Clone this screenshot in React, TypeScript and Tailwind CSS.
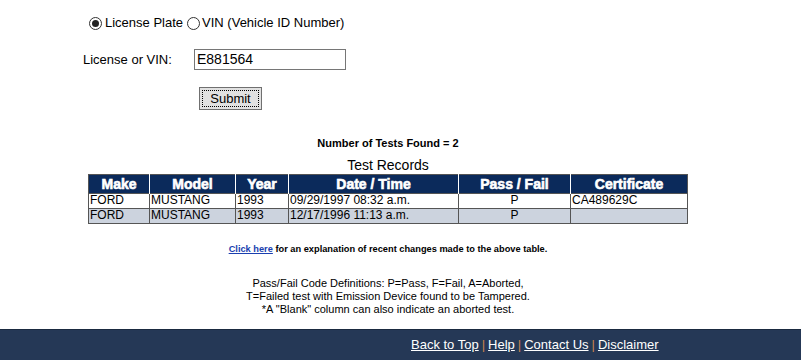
import React from "react";

const COLS = [
  { label: "Make", w: "w-[61px]" },
  { label: "Model", w: "w-[86px]" },
  { label: "Year", w: "w-[53px]" },
  { label: "Date / Time", w: "w-[170px]" },
  { label: "Pass / Fail", w: "w-[112px]" },
  { label: "Certificate", w: "w-[117px]" },
];

const ROWS = [
  ["FORD", "MUSTANG", "1993", "09/29/1997 08:32 a.m.", "P", "CA489629C"],
  ["FORD", "MUSTANG", "1993", "12/17/1996 11:13 a.m.", "P", ""],
];

export default function App() {
  return (
    <div className="flex h-[360px] w-[801px] flex-col bg-white font-['Liberation_Sans',Arial,sans-serif] text-black">
      <div className="w-[776px] flex-1">
        <div className="flex items-center pl-[89px] pt-[14px] text-[13px] leading-[18px]">
          <span className="mr-[3px] flex h-[13px] w-[13px] items-center justify-center rounded-full border border-[#333]">
            <span className="h-[7px] w-[7px] rounded-full bg-[#222]" />
          </span>
          <span>License Plate</span>
          <span className="ml-[4px] mr-[2px] h-[13px] w-[13px] rounded-full border border-[#333]" />
          <span>VIN (Vehicle ID Number)</span>
        </div>

        <div className="mt-[17px] flex items-center pl-[83px] text-[13px]">
          <span className="w-[111px]">License or VIN:</span>
          <div className="flex h-[21px] w-[152px] items-center border border-[#767676] px-[2px] text-[14px]">
            E881564
          </div>
        </div>

        <div className="mt-[16px] pl-[199px]">
          <button className="h-[23px] w-[63px] border border-[#707070] bg-[#e1e1e1] text-[13px] outline-1 outline-dotted outline-offset-[-4px] outline-black">
            Submit
          </button>
        </div>

        <p className="mt-[25px] text-center text-[11px] font-bold">Number of Tests Found = 2</p>
        <p className="mt-[5px] text-center text-[14px] leading-[16px]">Test Records</p>

        <table className="ml-[88px] mt-[1px] border-collapse border border-[#555] text-[12px]">
          <thead>
            <tr className="bg-[#0b2a5b] text-white">
              {COLS.map((c) => (
                <th
                  key={c.label}
                  className={`${c.w} h-[19px] border-l border-white p-0 text-center text-[14px] font-bold leading-[16px] [-webkit-text-stroke:0.6px_white] first:border-l-0`}
                >
                  {c.label}
                </th>
              ))}
            </tr>
          </thead>
          <tbody>
            {ROWS.map((r, i) => (
              <tr key={i} className={i % 2 ? "bg-[#ccd3de]" : "bg-white"}>
                {r.map((v, j) => (
                  <td
                    key={j}
                    className={`h-[15px] border border-[#555] px-[1px] py-0 leading-[13px] ${j === 4 ? "text-center" : "text-left"}`}
                  >
                    {v}
                  </td>
                ))}
              </tr>
            ))}
          </tbody>
        </table>

        <p className="mt-[19px] text-center text-[9.25px] font-bold">
          <a href="#" className="text-[#1a3fb0] underline">Click here</a> for an explanation of recent changes made to the above table.
        </p>

        <div className="mt-[20px] text-center text-[11px] leading-[13px]">
          <p>Pass/Fail Code Definitions: P=Pass, F=Fail, A=Aborted,</p>
          <p>T=Failed test with Emission Device found to be Tampered.</p>
          <p>*A "Blank" column can also indicate an aborted test.</p>
        </div>
      </div>

      <div className="flex h-[31px] items-center border-t border-[#1a2a40] bg-[#253856] pl-[411px] text-[13px] text-white">
        <a href="#" className="underline">Back to Top</a>
        <span className="mx-[3px] text-[#c8824e]">|</span>
        <a href="#" className="underline">Help</a>
        <span className="mx-[3px] text-[#c8824e]">|</span>
        <a href="#" className="underline">Contact Us</a>
        <span className="mx-[3px] text-[#c8824e]">|</span>
        <a href="#" className="underline">Disclaimer</a>
      </div>
    </div>
  );
}
